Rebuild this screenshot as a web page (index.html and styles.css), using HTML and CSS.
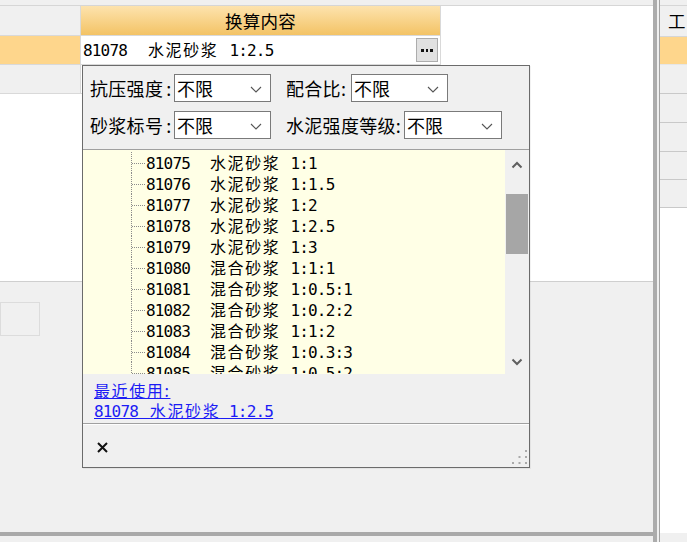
FILE: index.html
```html
<!DOCTYPE html>
<html lang="zh-CN">
<head>
<meta charset="utf-8">
<title>换算内容</title>
<link rel="stylesheet" href="styles.css">
</head>
<body>
<div class="app">
  <div class="main">
    <div class="topstrip"></div>
    <div class="grid-area">
      <div class="row hdr">
        <div class="c0"></div>
        <div class="c1 hdrcell">换算内容</div>
      </div>
      <div class="row r1">
        <div class="c0 orange"></div>
        <div class="c1 edit">
          <span class="txt"><span class="mono">81078</span><span class="cjk gap2">水泥砂浆</span><span class="mono gap1e">1:2.5</span></span>
          <span class="ellip"><i></i><i></i><i></i></span>
        </div>
      </div>
      <div class="row r2">
        <div class="c0"></div>
        <div class="c1"></div>
      </div>
    </div>
    <div class="lower"><div class="box"></div></div>
    <div class="hsplit"></div>
    <div class="bottompad"></div>
  </div>
  <div class="vsplit"></div>
  <div class="side">
    <div class="topstrip"></div>
    <div class="side-hdr">工</div>
    <div class="side-row orange"></div>
    <div class="side-row"></div>
    <div class="side-row"></div>
    <div class="side-row"></div>
    <div class="side-row short"></div>
    <div class="side-row short"></div>
    <div class="side-fill"></div>
    <div class="bottompad2"></div>
  </div>

  <div class="popup">
    <div class="filters">
      <div class="frow">
        <span class="lbl w84">抗压强度<span class="colon">:</span></span>
        <div class="select w97"><span>不限</span><svg width="12" height="7" viewBox="0 0 12 7"><polyline points="1,1 6,6 11,1" fill="none" stroke="#555" stroke-width="1.1"/></svg></div>
        <span class="lbl w65 ml15">配合比<span class="colon0">:</span></span>
        <div class="select w97"><span>不限</span><svg width="12" height="7" viewBox="0 0 12 7"><polyline points="1,1 6,6 11,1" fill="none" stroke="#555" stroke-width="1.1"/></svg></div>
      </div>
      <div class="frow">
        <span class="lbl w84">砂浆标号<span class="colon">:</span></span>
        <div class="select w97"><span>不限</span><svg width="12" height="7" viewBox="0 0 12 7"><polyline points="1,1 6,6 11,1" fill="none" stroke="#555" stroke-width="1.1"/></svg></div>
        <span class="lbl w118 ml15">水泥强度等级<span class="colon0">:</span></span>
        <div class="select w98"><span>不限</span><svg width="12" height="7" viewBox="0 0 12 7"><polyline points="1,1 6,6 11,1" fill="none" stroke="#555" stroke-width="1.1"/></svg></div>
      </div>
    </div>
    <div class="listwrap">
      <div class="list">
        <div class="trow"><span class="branch"></span><span class="txt"><span class="mono">81075</span><span class="cjk gap2t">水泥砂浆</span><span class="mono gap1">1:1</span></span></div>
        <div class="trow"><span class="branch"></span><span class="txt"><span class="mono">81076</span><span class="cjk gap2t">水泥砂浆</span><span class="mono gap1">1:1.5</span></span></div>
        <div class="trow"><span class="branch"></span><span class="txt"><span class="mono">81077</span><span class="cjk gap2t">水泥砂浆</span><span class="mono gap1">1:2</span></span></div>
        <div class="trow"><span class="branch"></span><span class="txt"><span class="mono">81078</span><span class="cjk gap2t">水泥砂浆</span><span class="mono gap1">1:2.5</span></span></div>
        <div class="trow"><span class="branch"></span><span class="txt"><span class="mono">81079</span><span class="cjk gap2t">水泥砂浆</span><span class="mono gap1">1:3</span></span></div>
        <div class="trow"><span class="branch"></span><span class="txt"><span class="mono">81080</span><span class="cjk gap2t">混合砂浆</span><span class="mono gap1">1:1:1</span></span></div>
        <div class="trow"><span class="branch"></span><span class="txt"><span class="mono">81081</span><span class="cjk gap2t">混合砂浆</span><span class="mono gap1">1:0.5:1</span></span></div>
        <div class="trow"><span class="branch"></span><span class="txt"><span class="mono">81082</span><span class="cjk gap2t">混合砂浆</span><span class="mono gap1">1:0.2:2</span></span></div>
        <div class="trow"><span class="branch"></span><span class="txt"><span class="mono">81083</span><span class="cjk gap2t">混合砂浆</span><span class="mono gap1">1:1:2</span></span></div>
        <div class="trow"><span class="branch"></span><span class="txt"><span class="mono">81084</span><span class="cjk gap2t">混合砂浆</span><span class="mono gap1">1:0.3:3</span></span></div>
        <div class="trow"><span class="branch"></span><span class="txt"><span class="mono">81085</span><span class="cjk gap2t">混合砂浆</span><span class="mono gap1">1:0.5:2</span></span></div>
        <div class="trow"><span class="branch"></span><span class="txt"><span class="mono">81086</span><span class="cjk gap2t">混合砂浆</span><span class="mono gap1">1:1:4</span></span></div>
      </div>
      <div class="scrollbar">
        <div class="sb-btn up"><svg width="12" height="8" viewBox="0 0 12 8"><polyline points="1.5,6.5 6,2 10.5,6.5" fill="none" stroke="#5f5f5f" stroke-width="2"/></svg></div>
        <div class="sb-track"><div class="thumb"></div></div>
        <div class="sb-btn down"><svg width="12" height="8" viewBox="0 0 12 8"><polyline points="1.5,1.5 6,6 10.5,1.5" fill="none" stroke="#5f5f5f" stroke-width="2"/></svg></div>
      </div>
    </div>
    <div class="recent">
      <a class="link cjk" href="#">最近使用:</a>
      <a class="link" href="#"><span class="mono first">81078 </span><span class="cjk">水泥砂浆</span><span class="mono"> 1:2.5</span></a>
    </div>
    <div class="footer">
      <svg class="close" width="11" height="11" viewBox="0 0 11 11"><path d="M1 1 L10 10 M10 1 L1 10" stroke="#111" stroke-width="2"/></svg>
      <svg class="grip" width="17" height="17" viewBox="0 0 17 17" fill="#aaa">
        <rect x="14" y="2" width="2" height="2"/>
        <rect x="7.5" y="8" width="2" height="2"/><rect x="14" y="8" width="2" height="2"/>
        <rect x="1" y="14" width="2" height="2"/><rect x="7.5" y="14" width="2" height="2"/><rect x="14" y="14" width="2" height="2"/>
      </svg>
    </div>
  </div>
</div>
</body>
</html>
```
FILE: styles.css
```css
* { box-sizing: border-box; }
html, body { margin: 0; padding: 0; }
body {
  width: 687px;
  height: 542px;
  overflow: hidden;
  background: #f0f0f0;
  color: #000;
  font-family: "Noto Sans CJK SC", sans-serif;
}
.app { display: flex; height: 542px; position: relative; }

/* ---------- main (left) area ---------- */
.main { width: 653px; display: flex; flex-direction: column; }
.topstrip { height: 6px; background: #f0f0f0; border-bottom: 1px solid #d6d6d6; flex: none; }
.grid-area { height: 275px; background: #fff; flex: none; }
.row { display: flex; width: 441px; border-bottom: 1px solid #d9d9d9; }
.row.hdr { height: 30px; }
.row.r1 { height: 29px; }
.row.r2 { height: 29px; }
.c0 { width: 81px; background: #f0f0f0; border-right: 1px solid #d9d9d9; }
.c0.orange { background: #fed68c; }
.c1 { width: 360px; border-right: 1px solid #d9d9d9; }
.hdrcell {
  background: linear-gradient(#fde3ae, #f3c365);
  text-align: center;
  font-size: 17.5px;
  line-height: 29px;
  letter-spacing: 0.3px;
}
.edit {
  display: flex;
  align-items: center;
  justify-content: space-between;
  padding-left: 2px;
  padding-right: 2px;
  background: #fff;
}
.edit .txt { line-height: 28px; white-space: pre; }
.ellip {
  width: 22px;
  height: 24px;
  background: #e1e1e1;
  border: 1px solid #adadad;
  display: flex;
  align-items: center;
  justify-content: center;
  gap: 2px;
  padding-top: 1px;
}
.ellip i { display: block; width: 2.5px; height: 2.5px; background: #111; }

.mono {
  font-family: "DejaVu Sans Mono", monospace;
  font-size: 16px;
  letter-spacing: -0.83px;
}
.cjk {
  font-family: "Noto Sans CJK SC", sans-serif;
  font-size: 16px;
  letter-spacing: 1.6px;
}
.gap2 { margin-left: 21px; }
.gap1e { margin-left: 11px; }
.gap2t { margin-left: 20px; }
.gap1 { margin-left: 10px; }

.lower {
  flex: 1;
  background: #f0f0f0;
  border-top: 1px solid #cfcfcf;
  padding-top: 20px;
}
.box { width: 40px; height: 34px; border: 1px solid #dcdcdc; }
.hsplit { height: 4px; background: #a9a9a9; flex: none; }
.bottompad { height: 6px; flex: none; }

.vsplit { width: 4px; background: #acacac; flex: none; }

/* ---------- right panel ---------- */
.side {
  flex: 1;
  margin-left: 2px;
  border-left: 1px solid #a3a3a3;
  display: flex;
  flex-direction: column;
}
.side-hdr {
  height: 31px;
  background: #f0f0f0;
  border-bottom: 1px solid #d6d6d6;
  font-size: 17.5px;
  line-height: 29px;
  padding-left: 8px;
  flex: none;
}
.side-row { height: 29px; background: #f0f0f0; border-bottom: 1px solid #c9c9c9; flex: none; }
.side-row.orange { height: 28px; background: #fed68c; border-bottom: 1px solid #e6e6e6; }
.side-row.short { height: 28px; }
.side-fill { flex: 1; background: #fff; }
.bottompad2 { height: 9px; flex: none; background: #f0f0f0; }

/* ---------- popup ---------- */
.popup {
  position: absolute;
  left: 82px;
  top: 65px;
  width: 448px;
  height: 403px;
  border: 1px solid #6b6b6b;
  background: #f0f0f0;
  display: flex;
  flex-direction: column;
  box-shadow: 1px 1px 0 rgba(0,0,0,0.05);
}
.filters {
  height: 84px;
  padding: 8px 0 0 7px;
  display: flex;
  flex-direction: column;
  gap: 9px;
  border-bottom: 1px solid #a0a0a0;
  flex: none;
}
.frow { display: flex; align-items: center; height: 28px; }
.lbl { font-size: 18px; letter-spacing: 0.3px; white-space: nowrap; line-height: 28px; }
.colon { margin-left: 3px; }
.colon0 { margin-left: 0; }
.w84 { width: 84px; }
.w65 { width: 65px; }
.w118 { width: 118px; }
.ml15 { margin-left: 15px; }
.select {
  height: 28px;
  background: #fff;
  border: 1px solid #7a7a7a;
  display: flex;
  align-items: center;
  justify-content: space-between;
  padding: 0 8px 0 2px;
  font-size: 18px;
  line-height: 26px;
}
.w97 { width: 97px; }
.w98 { width: 98px; }
.select svg { margin-top: 2px; }

.listwrap { height: 224px; display: flex; flex: none; }
.list {
  flex: 1;
  background: #ffffe6;
  overflow: hidden;
  padding: 2px 0 0 48px;
}
.trow { display: flex; height: 21px; }
.branch {
  width: 14px;
  border-left: 1px dotted #8c8c8c;
  position: relative;
  flex: none;
}
.branch::after {
  content: "";
  position: absolute;
  left: 0;
  right: 0;
  top: 11px;
  border-top: 1px dotted #8c8c8c;
}
.trow .txt { margin-left: 1px; line-height: 21px; white-space: pre; }

.scrollbar {
  width: 24px;
  background: #f0f0f0;
  display: flex;
  flex-direction: column;
  flex: none;
}
.sb-btn { display: flex; align-items: center; justify-content: center; flex: none; }
.sb-btn.up { height: 30px; }
.sb-btn.down { height: 24px; }
.sb-track { flex: 1; padding: 14px 1px 0 1px; }
.thumb { height: 60px; background: #a6a6a6; }

.recent {
  height: 50px;
  padding: 6px 0 0 11px;
  display: flex;
  flex-direction: column;
  border-bottom: 1px solid #a0a0a0;
  flex: none;
}
.link {
  color: #1c1cf5;
  text-decoration: underline;
  line-height: 20px;
  white-space: pre;
  align-self: flex-start;
}
.link.cjk { font-size: 16px; }
.link .mono, .link .cjk { text-decoration: inherit; }
.link .mono.first { word-spacing: 3px; }

.footer {
  flex: 1;
  display: flex;
  justify-content: space-between;
  align-items: center;
  padding-left: 14px;
  box-shadow: inset 0 1px 0 #fdfdfd;
}
.close { margin-top: 4px; }
.grip { align-self: flex-end; margin-bottom: 2px; margin-right: 1px; }
```
